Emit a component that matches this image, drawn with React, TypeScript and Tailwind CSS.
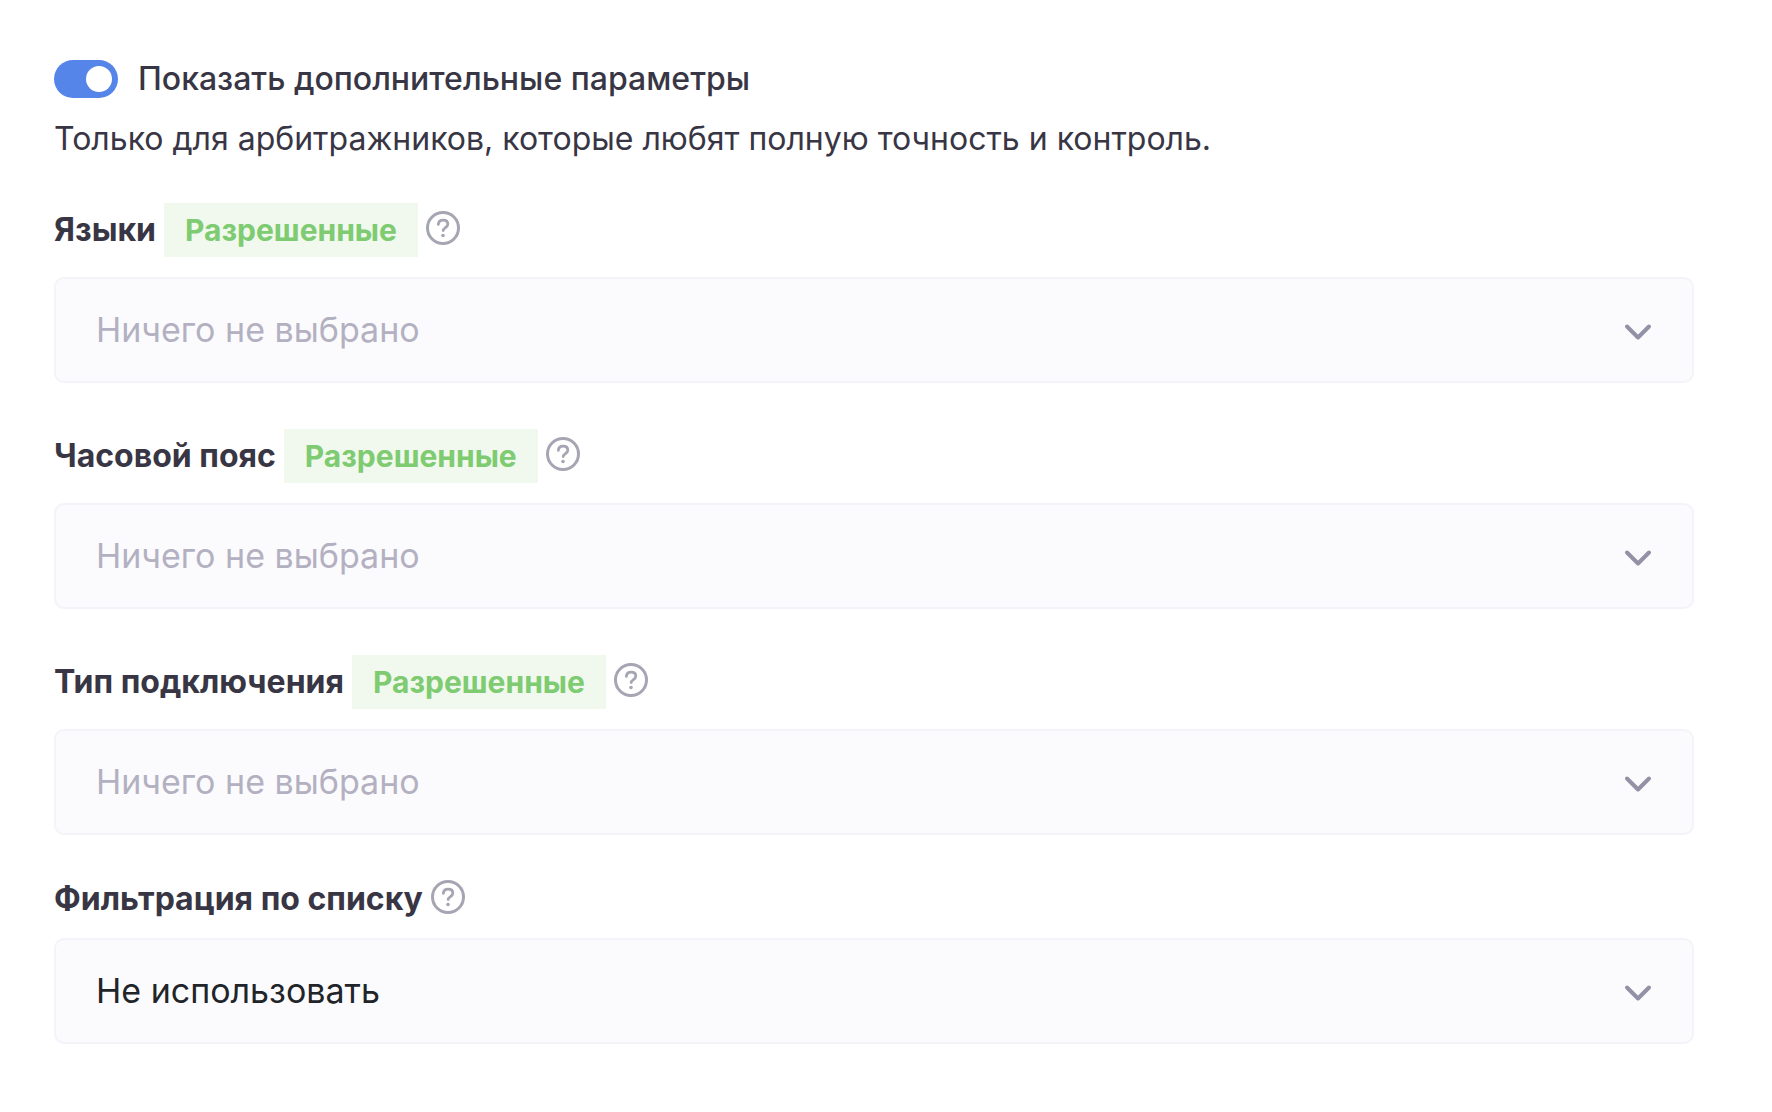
import { useId, useState } from "react";

type FilterProps = {
  label: string;
  badge?: string;
  options: string[];
  placeholder?: boolean;
};

const filters: FilterProps[] = [
  { label: "Языки", badge: "Разрешенные", options: ["Ничего не выбрано"], placeholder: true },
  { label: "Часовой пояс", badge: "Разрешенные", options: ["Ничего не выбрано"], placeholder: true },
  { label: "Тип подключения", badge: "Разрешенные", options: ["Ничего не выбрано"], placeholder: true },
  { label: "Фильтрация по списку", options: ["Не использовать"] },
];

function HelpIcon() {
  return (
    <svg viewBox="0 0 34 34" className="size-[34px]" fill="none" stroke="#a6a5b3" strokeLinecap="round">
      <circle cx="17" cy="17" r="15.5" strokeWidth="3" />
      <path d="M12.3 13.4c.3-2.7 2.1-4.2 4.8-4.2 2.8 0 4.7 1.6 4.7 4 0 3.2-4.6 3.4-4.6 6.4" strokeWidth="2.8" />
      <circle cx="17" cy="24.5" r="1.8" fill="#a6a5b3" stroke="none" />
    </svg>
  );
}

function Chevron() {
  return (
    <svg
      viewBox="0 0 28 18"
      className="pointer-events-none col-start-1 row-start-1 mt-1 mr-[42px] h-[18px] w-7 self-center justify-self-end"
      fill="none"
      stroke="#9391a5"
      strokeWidth="4"
      strokeLinecap="round"
      strokeLinejoin="round"
    >
      <path d="M3 3.5 14 14.5 25 3.5" />
    </svg>
  );
}

function Filter({ label, badge, options, placeholder }: FilterProps) {
  const id = useId();

  return (
    <div>
      <div className={badge ? "mb-5 flex h-[54px] items-center" : "mb-[21px] flex h-9 items-center"}>
        <label htmlFor={id} className="text-[32px] font-bold text-[#383644]">
          {label}
        </label>
        {badge && (
          <button
            type="button"
            className="ml-2 h-[54px] bg-[#f1f9ee] px-[21px] text-[30px] font-bold text-[#7ecb72]"
          >
            {badge}
          </button>
        )}
        <button type="button" aria-label="Справка" className="ml-2 mb-1">
          <HelpIcon />
        </button>
      </div>
      <div className="grid">
        <select
          id={id}
          className={`col-start-1 row-start-1 h-[106px] w-full appearance-none rounded-[10px] border-2 border-[#f3f3fa] bg-[#fbfbfd] px-10 pb-0.5 text-[34px] ${
            placeholder ? "text-[#b3b1c1]" : "text-[#212529]"
          }`}
        >
          {options.map((option) => (
            <option key={option}>{option}</option>
          ))}
        </select>
        <Chevron />
      </div>
    </div>
  );
}

export default function App() {
  const [advanced, setAdvanced] = useState(true);

  return (
    <main className="bg-white pt-15 pr-[78px] pb-17 pl-[54px] font-[Inter,sans-serif] text-[#383644]">
      <label className="flex h-[38px] items-center gap-5 text-[32px] font-medium">
        <input
          type="checkbox"
          role="switch"
          checked={advanced}
          onChange={(e) => setAdvanced(e.target.checked)}
          className="peer sr-only"
        />
        <span className="flex h-[38px] w-16 items-center rounded-full bg-[#c9c8d3] p-1.5 peer-checked:justify-end peer-checked:bg-[#5685e9]">
          <span className="size-[26px] rounded-full bg-white" />
        </span>
        Показать дополнительные параметры
      </label>
      <p className="mt-[21px] text-[32px] leading-10">
        Только для арбитражников, которые любят полную точность и контроль.
      </p>

      {advanced && (
        <div className="mt-11 flex flex-col gap-[46px]">
          {filters.map((filter) => (
            <Filter key={filter.label} {...filter} />
          ))}
        </div>
      )}
    </main>
  );
}
